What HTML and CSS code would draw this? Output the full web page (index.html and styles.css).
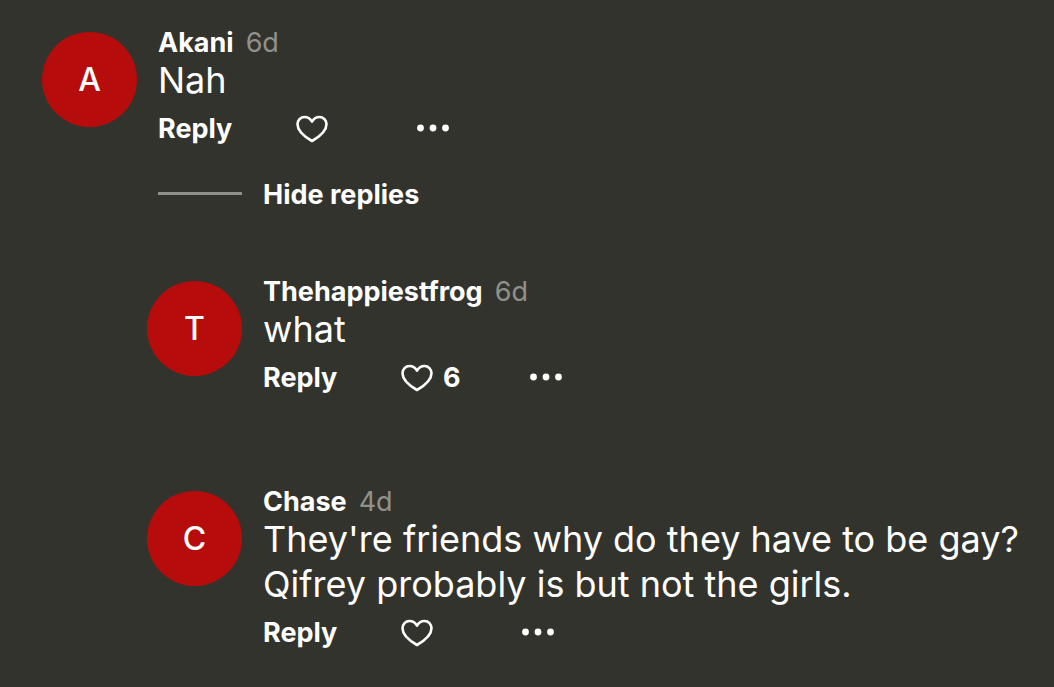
FILE: index.html
```html
<!DOCTYPE html>
<html lang="en">
<head>
<meta charset="utf-8">
<meta name="viewport" content="width=device-width, initial-scale=1">
<title>Comments</title>
<link rel="stylesheet" href="styles.css">
</head>
<body>
<svg class="sprite" aria-hidden="true">
  <symbol id="heart" viewBox="0 0 32 28">
    <path d="M16 26C13.200 24.400 1.500 17.500 1.500 9.300C1.500 5 4.600 2 8.500 2C12 2 14.500 4 16 6.600C17.500 4 20 2 23.500 2C27.400 2 30.500 5 30.500 9.300C30.500 17.500 18.800 24.400 16 26Z" fill="none" stroke="currentColor" stroke-width="2.600" stroke-linejoin="round"/>
  </symbol>
  <symbol id="dots" viewBox="0 0 32 8">
    <circle cx="3.500" cy="4" r="3.400" fill="currentColor"/>
    <circle cx="16" cy="4" r="3.400" fill="currentColor"/>
    <circle cx="28.500" cy="4" r="3.400" fill="currentColor"/>
  </symbol>
</svg>
<main class="thread">
  <article class="comment">
    <div class="avatar" aria-hidden="true">A</div>
    <div class="content">
      <header class="meta"><span class="name">Akani</span><span class="time">6d</span></header>
      <p class="text">Nah</p>
      <div class="actions">
        <button class="reply" type="button">Reply</button>
        <button class="like" type="button" aria-label="Like"><svg class="heart"><use href="#heart"/></svg></button>
        <button class="more" type="button" aria-label="More options"><svg class="dots"><use href="#dots"/></svg></button>
      </div>
      <button class="toggle" type="button">Hide replies</button>
    </div>
  </article>
  <section class="replies" aria-label="Replies">
    <article class="comment">
      <div class="avatar" aria-hidden="true">T</div>
      <div class="content">
        <header class="meta"><span class="name">Thehappiestfrog</span><span class="time">6d</span></header>
        <p class="text">what</p>
        <div class="actions">
          <button class="reply" type="button">Reply</button>
          <button class="like" type="button" aria-label="Like, 6 likes"><svg class="heart"><use href="#heart"/></svg><span>6</span></button>
          <button class="more" type="button" aria-label="More options"><svg class="dots"><use href="#dots"/></svg></button>
        </div>
      </div>
    </article>
    <article class="comment">
      <div class="avatar" aria-hidden="true">C</div>
      <div class="content">
        <header class="meta"><span class="name">Chase</span><span class="time">4d</span></header>
        <p class="text">They're friends why do they have to be gay?<br>Qifrey probably is but not the girls.</p>
        <div class="actions">
          <button class="reply" type="button">Reply</button>
          <button class="like" type="button" aria-label="Like"><svg class="heart"><use href="#heart"/></svg></button>
          <button class="more" type="button" aria-label="More options"><svg class="dots"><use href="#dots"/></svg></button>
        </div>
      </div>
    </article>
  </section>
</main>
</body>
</html>
```
FILE: styles.css
```css
* { box-sizing: border-box; }
body {
  margin: 0;
  background: #33332e;
  color: #fff;
  font-family: Inter, "Liberation Sans", sans-serif;
}
.sprite { display: none; }
.thread { padding: 28px 0 0 42px; }
.comment { display: flex; gap: 21px; }
.avatar {
  display: flex;
  flex: none;
  align-items: center;
  justify-content: center;
  width: 95px;
  height: 95px;
  margin-top: 4px;
  border-radius: 50%;
  background: #b60c0b;
  font-size: 32px;
  font-weight: 500;
}
.content { flex: 1; min-width: 0; }
.meta {
  display: flex;
  gap: 12px;
  font-size: 27px;
  line-height: 30px;
}
.name { font-weight: 700; }
.time { color: #91918c; }
.text {
  margin: 0;
  font-size: 36px;
  line-height: 45px;
}
.actions {
  display: flex;
  align-items: center;
  height: 36px;
  margin-top: 8px;
}
button {
  padding: 0;
  border: 0;
  background: none;
  color: inherit;
  font: 700 27px/36px Inter, "Liberation Sans", sans-serif;
  text-align: left;
  cursor: pointer;
}
.reply { width: 138px; }
.like {
  display: flex;
  align-items: center;
  gap: 10px;
  min-width: 52px;
  margin-right: 69px;
}
.heart { width: 32px; height: 28px; }
.more { display: flex; padding-bottom: 2px; }
.dots { width: 32px; height: 8px; }
.toggle {
  display: flex;
  align-items: center;
  gap: 21px;
  margin-top: 30px;
}
.toggle::before {
  width: 84px;
  height: 3px;
  margin-bottom: 3px;
  background: #91918c;
  content: "";
}
.replies {
  display: grid;
  gap: 91px;
  padding: 64px 0 36px 105px;
}
```
